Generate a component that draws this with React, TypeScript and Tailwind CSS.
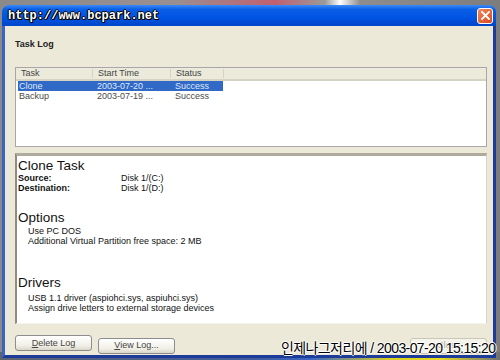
import React from 'react';

const ui = { fontFamily: '"Liberation Sans", Arial, sans-serif' };

function XpButton({ children, disabled }: { children: React.ReactNode; disabled?: boolean }) {
  return (
    <button
      className={[
        'h-[16px] w-[77px] rounded-[3px] border text-[9px] leading-none',
        disabled
          ? 'border-[#c9c7ba] bg-[#f5f4ea] text-[#aca899]'
          : 'border-[#8d8d8d] bg-[linear-gradient(#ffffff,#f0efe6_70%,#d9d6c8)] text-[#444]',
      ].join(' ')}
    >
      {children}
    </button>
  );
}

function Row({ task, time, selected }: { task: string; time: string; selected?: boolean }) {
  return (
    <div
      className={[
        'flex h-[10px] w-[205px] items-center text-[9px] leading-none',
        selected ? 'bg-[#3169c6] text-[#dfe8f8]' : 'text-[#4a4a4a]',
      ].join(' ')}
    >
      <span className="w-[79px] pl-[1px]">{task}</span>
      <span className="w-[78px]">{time}</span>
      <span>Success</span>
    </div>
  );
}

export default function App() {
  return (
    <div
      className="relative flex h-[360px] w-[500px] flex-col overflow-hidden bg-[linear-gradient(90deg,#8a8a8a_0%,#9a8f90_35%,#c06070_55%,#9a9a9a_65%,#ffffff_68%,#8d8d8d_72%,#7d7d7d_100%)] pb-[7px] pl-[2px] pr-[4px] pt-[5px]"
      style={ui}
    >
      {/* desktop strip under the window */}
      <div className="absolute bottom-0 left-0 h-[8px] w-[500px] bg-[linear-gradient(90deg,#5d6470_0%,#3f5c9c_50%,#3a66c4_62%,#d9d020_78%,#e6dc20_88%,#6e7072_100%)]" />

      <div className="relative z-10 flex flex-1 flex-col">
        {/* title bar */}
        <div className="flex h-[21px] items-center justify-between rounded-t-[7px] bg-[linear-gradient(#3d8af7,#0a5fe6_20%,#0054e3_60%,#0046c8)] pl-[6px] pr-[3px]">
          <span
            className="text-[12px] font-bold leading-none text-white"
            style={{
              fontFamily: '"Liberation Mono", monospace',
              textShadow: '1px 0 #000, -1px 0 #000, 0 1px #000, 0 -1px #000, 1px 1px #000',
            }}
          >
            http://www.bcpark.net
          </span>
          <div className="flex h-[16px] w-[16px] items-center justify-center rounded-[3px] border border-white bg-[linear-gradient(135deg,#f08a5e,#d9481c)]">
            <svg width="9" height="9" viewBox="0 0 9 9">
              <path d="M1 1 L8 8 M8 1 L1 8" stroke="#fff" strokeWidth="1.8" strokeLinecap="square" />
            </svg>
          </div>
        </div>

        {/* window body */}
        <div className="flex flex-1 flex-col border-x-[3px] border-b-[3px] border-l-[#3b63c0] border-r-[#1d3c9a] border-b-[#1d3c9a] bg-[#ece9d8] pl-[10px] pr-[6px] pt-[14px]">
          <div className="h-[11px] text-[9px] font-bold leading-none text-[#222]">Task Log</div>

          {/* list view */}
          <div className="mt-[16px] h-[80px] border border-[#a7a6aa] bg-white">
            <div className="flex h-[13px] items-center border-b-2 border-[#d6d3c4] bg-[#ebeadb] text-[9px] leading-none text-[#444]">
              <span className="w-[77px] border-r border-[#d6d3c4] pl-[5px]">Task</span>
              <span className="w-[78px] border-r border-[#d6d3c4] pl-[5px]">Start Time</span>
              <span className="w-[53px] border-r border-[#d6d3c4] pl-[5px]">Status</span>
            </div>
            <div className="pl-[2px]">
              <Row task="Clone" time="2003-07-20 ..." selected />
              <Row task="Backup" time="2003-07-19 ..." />
            </div>
          </div>

          {/* details panel */}
          <div className="mt-[6px] h-[171px] border-b border-l-2 border-r border-t-[3px] border-b-[#f4f3ee] border-l-[#8e8c80] border-r-[#d8d5c6] border-t-[#aeab9c] bg-white pl-[1px] pt-[2px] text-[#111]">
            <div className="text-[13.5px] leading-[15px]">Clone Task</div>
            <div className="flex text-[9px] leading-[10px]">
              <span className="w-[103px] font-bold">Source:</span>
              <span>Disk 1/(C:)</span>
            </div>
            <div className="flex text-[9px] leading-[10px]">
              <span className="w-[103px] font-bold">Destination:</span>
              <span>Disk 1/(D:)</span>
            </div>
            <div className="mt-[17px] text-[13.5px] leading-[15px]">Options</div>
            <div className="mt-[1px] pl-[10px] text-[9px] leading-[10px]">
              <div>Use PC DOS</div>
              <div>Additional Virtual Partition free space: 2 MB</div>
            </div>
            <div className="mt-[29px] text-[13.5px] leading-[15px]">Drivers</div>
            <div className="mt-[3px] pl-[10px] text-[9px] leading-[10px]">
              <div>USB 1.1 driver (aspiohci.sys, aspiuhci.sys)</div>
              <div>Assign drive letters to external storage devices</div>
            </div>
          </div>

          {/* buttons */}
          <div className="mt-[7px] flex items-center">
            <XpButton>
              <span className="underline">D</span>elete Log
            </XpButton>
            <div className="ml-[6px]">
              <XpButton>
                <span className="underline">V</span>iew Log...
              </XpButton>
            </div>
            <div className="ml-auto">
              <XpButton disabled>Close</XpButton>
            </div>
          </div>
        </div>
      </div>

      {/* screenshot caption overlay */}
      <div
        className="absolute left-[281px] top-[341px] z-20 whitespace-nowrap text-[14px] leading-none tracking-[-0.6px] text-black"
        style={{
          fontFamily: '"Liberation Sans", "Noto Sans CJK KR", sans-serif',
          textShadow: '1px 0 #fff, -1px 0 #fff, 0 1px #fff, 0 -1px #fff',
        }}
      >
        인제나그저리에 / 2003-07-20 15:15:20
      </div>
    </div>
  );
}
